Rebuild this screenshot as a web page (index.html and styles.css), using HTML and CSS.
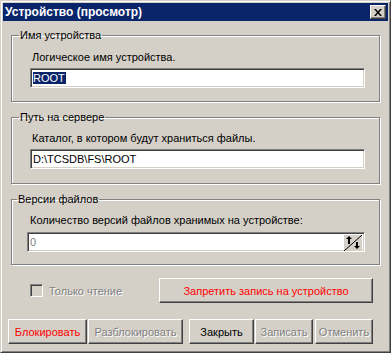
FILE: index.html
```html
<!DOCTYPE html>
<html lang="ru">
<head>
    <meta charset="UTF-8">
    <title>Устройство (просмотр)</title>
    <link rel="stylesheet" href="styles.css">
</head>
<body>

    <div class="window">
        <div class="titlebar">
            <span class="title">Устройство (просмотр)</span>
            <span class="close">
                <svg width="8" height="7" viewBox="0 0 8 7">
                    <path d="M0 0h2l2 2.5L6 0h2L5 3.5 8 7H6L4 4.5 2 7H0l3-3.5z" fill="#000"/>
                </svg>
            </span>
        </div>

        <div class="content">
            <fieldset class="group">
                <legend>Имя устройства</legend>
                <div class="caption">Логическое имя устройства.</div>
                <div class="edit"><span class="sel">ROOT</span></div>
            </fieldset>

            <fieldset class="group group-path">
                <legend>Путь на сервере</legend>
                <div class="caption">Каталог, в котором будут храниться файлы.</div>
                <div class="edit">D:\TCSDB\FS\ROOT</div>
            </fieldset>

            <fieldset class="group group-versions">
                <legend>Версии файлов</legend>
                <div class="caption">Количество версий файлов хранимых на устройстве:</div>
                <div class="edit edit-spin">
                    <span class="muted">0</span>
                    <span class="spin">
                        <svg width="18" height="16" viewBox="0 0 18 16">
                            <path d="M0 16L18 0" stroke="#000" stroke-width="1"/>
                            <path d="M5 1l3 3H2z" fill="#000"/>
                            <rect x="4" y="4" width="2" height="5" fill="#000"/>
                            <rect x="12" y="7" width="2" height="5" fill="#000"/>
                            <path d="M10 11h6l-3 3z" fill="#000"/>
                        </svg>
                    </span>
                </div>
            </fieldset>

            <div class="options">
                <label class="check">
                    <span class="box"></span>
                    <span class="disabled">Только чтение</span>
                </label>
                <button class="btn btn-red btn-lock-write">Запретить запись на устройство</button>
            </div>

            <div class="actions">
                <button class="btn btn-red btn-block">Блокировать</button>
                <button class="btn disabled btn-unblock">Разблокировать</button>
                <button class="btn btn-close">Закрыть</button>
                <button class="btn disabled btn-save">Записать</button>
                <button class="btn disabled btn-cancel">Отменить</button>
            </div>
        </div>
    </div>

</body>
</html>
```

FILE: styles.css
```css
body {
    margin: 0;
    font-family: "Liberation Sans", Arial, sans-serif;
    font-size: 11px;
    background-color: #d4d0c8;
}
.window {
    width: 391px;
    height: 353px;
    box-sizing: border-box;
    background: #d4d0c8;
    border: 1px solid;
    border-color: #d4d0c8 #404040 #404040 #d4d0c8;
    box-shadow: inset 1px 1px #fff, inset -1px -1px #808080;
    padding: 2px;
}
.titlebar {
    height: 18px;
    background: #0a246a;
    color: white;
    display: flex;
    align-items: center;
    justify-content: space-between;
    padding: 0 2px;
}
.title {
    font-weight: bold;
    font-size: 12px;
}
.close {
    width: 16px;
    height: 14px;
    box-sizing: border-box;
    background: #d4d0c8;
    border: 1px solid;
    border-color: #fff #404040 #404040 #fff;
    box-shadow: inset -1px -1px #808080;
    display: flex;
    align-items: center;
    justify-content: center;
}
.content {
    padding: 8px 8px 0 8px;
}

/* group boxes */
.group {
    margin: 0 0 9px 0;
    padding: 9px 0 13px 0;
    min-width: 0;
    border: 1px solid #808080;
    box-shadow: inset 1px 1px #fff, 1px 1px #fff;
}
.group legend {
    margin-left: 7px;
    padding: 0 1px;
    line-height: 13px;
    color: #000;
}
.group-path {
    padding-top: 8px;
    padding-bottom: 14px;
}
.group-versions {
    padding-top: 8px;
    padding-bottom: 12px;
}
.group-versions legend {
    margin-left: 5px;
}
.caption {
    line-height: 13px;
    margin-left: 20px;
    margin-bottom: 4px;
}
.group-versions .caption {
    margin-left: 18px;
    margin-bottom: 5px;
}
.edit {
    margin-left: 18px;
    width: 335px;
    height: 20px;
    box-sizing: border-box;
    background: white;
    border: 1px solid;
    border-color: #808080 #fff #fff #808080;
    box-shadow: inset 1px 1px #404040, inset -1px -1px #d4d0c8;
    padding: 2px 2px 0 2px;
    line-height: 14px;
    white-space: nowrap;
}
.edit-spin {
    margin-left: 15px;
    width: 338px;
    display: flex;
    justify-content: space-between;
    padding-right: 2px;
}
.sel {
    background: #0a246a;
    color: white;
    padding: 0 1px 0 0;
}
.muted {
    color: #808080;
}
.spin {
    width: 18px;
    height: 16px;
    background: #d4d0c8;
}
.spin svg {
    display: block;
}

/* checkbox + lock button */
.options {
    display: flex;
    align-items: center;
    margin-top: 13px;
}
.check {
    display: flex;
    align-items: center;
    margin-left: 19px;
    white-space: nowrap;
}
.box {
    width: 13px;
    height: 13px;
    box-sizing: border-box;
    border: 1px solid;
    border-color: #808080 #fff #fff #808080;
    box-shadow: inset 1px 1px #404040, inset -1px -1px #d4d0c8;
    margin-right: 6px;
}
.disabled {
    color: #808080;
    text-shadow: 1px 1px 0 #fff;
}

/* buttons */
.btn {
    font-family: "Liberation Sans", Arial, sans-serif;
    font-size: 11px;
    height: 25px;
    padding: 0;
    background: #d4d0c8;
    color: #000;
    border: 1px solid;
    border-color: #fff #404040 #404040 #fff;
    box-shadow: inset -1px -1px #808080;
    border-radius: 0;
    white-space: nowrap;
}
.btn.btn-red {
    color: #ff0000;
}
.btn.disabled {
    color: #808080;
    text-shadow: 1px 1px 0 #fff;
}
.btn-lock-write {
    width: 214px;
    margin-left: auto;
    margin-right: 7px;
}
.actions {
    display: flex;
    margin: 16px 0 0 -3px;
}
.btn-block {
    width: 79px;
}
.btn-unblock {
    width: 95px;
    margin-left: 1px;
}
.btn-close {
    width: 65px;
    margin-left: 6px;
}
.btn-save {
    width: 58px;
    margin-left: 1px;
}
.btn-cancel {
    width: 58px;
    margin-left: 2px;
}
```
